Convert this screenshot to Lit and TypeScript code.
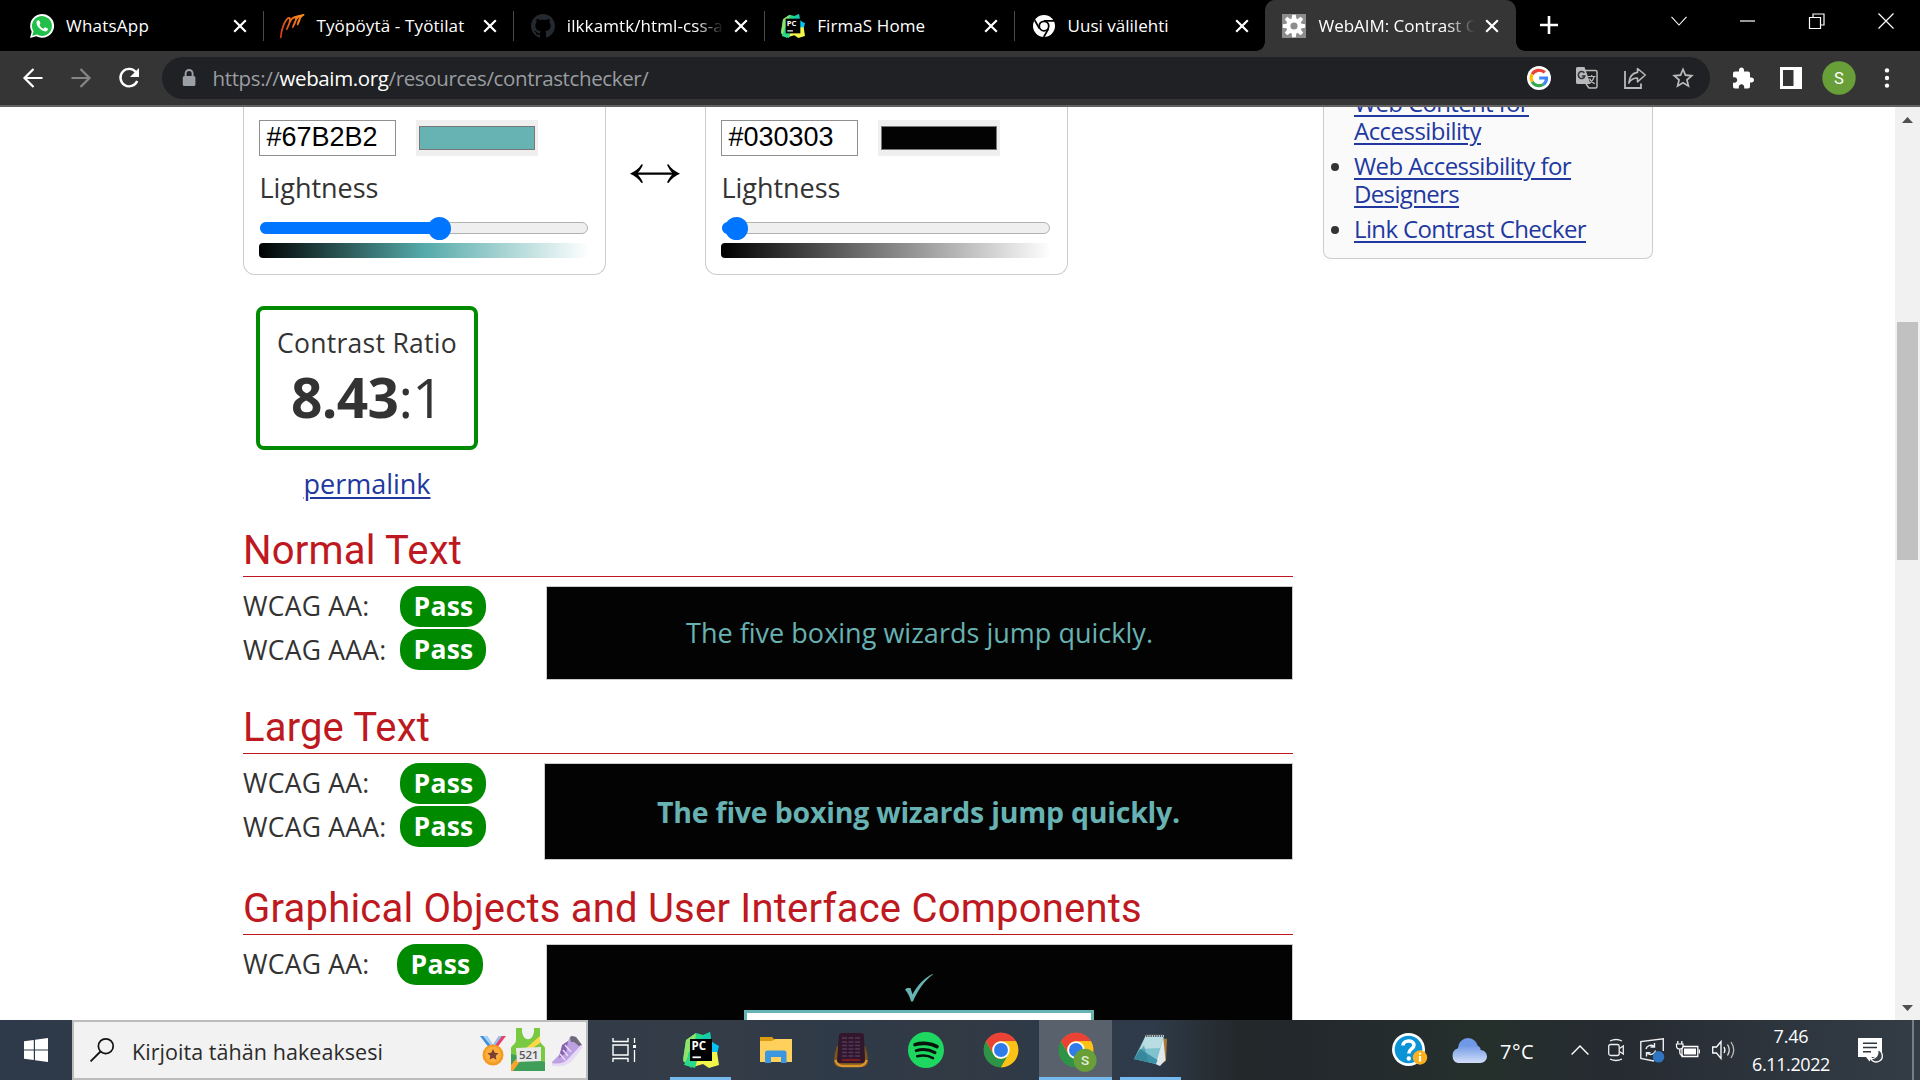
import { LitElement, html, css, svg } from "lit";
import { customElement, property } from "lit/decorators.js";

/* One line of text whose letter spacing is tuned to a given advance width. */
@customElement("fit-text")
class FitText extends LitElement {
  @property({ type: Number }) w = 0;
  static styles = css`
    :host { display: inline; white-space: nowrap; }
  `;
  render() { return html`<slot></slot>`; }
  firstUpdated() {
    const n = (this.textContent || "").trim().length;
    const natural = this.getBoundingClientRect().width;
    if (this.w && n && natural) this.style.letterSpacing = `${((this.w - natural) / n).toFixed(3)}px`;
  }
}

const icon = (w: number, h: number, vb: string, body: unknown) =>
  html`<svg width=${w} height=${h} viewBox=${vb} fill="none" aria-hidden="true">${body}</svg>`;

const chromeLogo = svg`
  <g>
    <circle cx="24" cy="24" r="21.5" fill="#fbbc05"/>
    <path d="M4.95 13A22 22 0 0 1 43.05 13L24 13A11 11 0 0 0 14.47 29.5Z" fill="#ea4335"/>
    <path transform="rotate(240 24 24)" d="M4.95 13A22 22 0 0 1 43.05 13L24 13A11 11 0 0 0 14.47 29.5Z" fill="#2d9347"/>
    <path transform="rotate(120 24 24)" d="M4.95 13A22 22 0 0 1 43.05 13L24 13A11 11 0 0 0 14.47 29.5Z" fill="#fcc215"/>
    <circle cx="24" cy="24" r="11" fill="#fff"/>
    <circle cx="24" cy="24" r="8.8" fill="#2f7bea"/>
  </g>`;

const pycharm = (size: number) => icon(size, size, "0 0 36 36", svg`
  <path d="M3 8L13 1L20 3L27 0L28 8L31 12L28 19L12 31L8 36L0 27Z" fill="#21d789"/>
  <path d="M3 8L13 1L12 10L5 22L6 34L0 29Z" fill="#8fe36b"/>
  <path d="M18 6L27 0L28 8L24 12Z" fill="#15c9b0"/>
  <path d="M29 10L36 14L34 22L28 21Z" fill="#07c3f2"/>
  <path d="M34 20L36 33L26 36L20 32L10 35L14 27L28 20Z" fill="#f2f54a"/>
  <path d="M5 24L14 29L12 36L1 33Z" fill="#2bd98a"/>
  <rect x="7" y="7" width="22" height="22" fill="#000"/>
  <text x="8.6" y="18.4" font-family="Open Sans, sans-serif" font-weight="700" font-size="11.5" fill="#fff">PC</text>
  <rect x="9.5" y="24.4" width="8.4" height="1.8" fill="#fff"/>`);

const favWhatsapp = icon(24, 24, "0 0 24 24", svg`
  <path d="M0 24L1.7 17.8A12 11.9 0 1 1 6.3 22.3Z" fill="#fff"/>
  <path d="M2.2 21.8L3.5 17.3A10 9.9 0 1 1 7 20.6Z" fill="#1fbf4a"/>
  <path d="M8.3 6.2c-.6-.1-1.8.7-1.8 2.4 0 3.800 4.900 8.800 8.900 8.800 1.600 0 2.700-1.100 2.600-2.600 0-.3-2.800-1.700-3.100-1.500l-1.300 1.400c-1.800-.7-3.300-2-4.100-3.800l.9-1.300c.1-.3-1-3.300-1.500-3.400z" fill="#fff"/>`);

const favWorkspace = icon(24, 24, "0 0 24 24", svg`
  <defs><linearGradient id="wk" x1="0" y1="1" x2="1" y2="0">
    <stop offset="0" stop-color="#d9341c"/><stop offset="1" stop-color="#f7941d"/></linearGradient></defs>
  <path d="M.8 23.500C1 17 4 7.500 8 4.200C11.500 2 10 9.500 6.800 15.200C9 9 12.500 3 15 2.800C17.300 3 15.500 8.500 12.800 13.200C14.500 8.500 17 2.800 19.400 2.400C21 2.600 19.500 7 17.600 10.600C18.300 6.400 20 3 23.600.8M12 4.500C16 2.500 20 1.500 23.600.8" stroke="url(#wk)" stroke-width="1.700" stroke-linecap="round" stroke-linejoin="round"/>`);

const favGithub = icon(24, 24, "0 0 16 16", svg`
  <path fill="#24292f" d="M8 0C3.58 0 0 3.58 0 8c0 3.54 2.29 6.53 5.47 7.59.4.07.55-.17.55-.38 0-.19-.01-.82-.01-1.49-2.01.37-2.53-.49-2.69-.94-.09-.23-.48-.94-.82-1.13-.28-.15-.68-.52-.01-.53.63-.01 1.080.58 1.230.82.72 1.210 1.870.87 2.330.66.07-.52.28-.87.51-1.070-1.780-.2-3.640-.89-3.640-3.950 0-.87.31-1.590.82-2.150-.08-.2-.36-1.020.08-2.120 0 0 .67-.21 2.200.82.64-.18 1.320-.27 2-.27s1.360.09 2 .27c1.530-1.040 2.200-.82 2.200-.82.44 1.100.16 1.920.08 2.120.51.56.82 1.270.82 2.150 0 3.070-1.870 3.750-3.650 3.950.29.25.54.73.54 1.480 0 1.070-.01 1.930-.01 2.200 0 .21.15.46.55.38A8.010 8.010 0 0 0 16 8c0-4.420-3.580-8-8-8z"/>`);

const favChromeMono = icon(24, 24, "0 0 48 48", svg`
  <circle cx="24" cy="24" r="22" fill="#fff"/>
  <circle cx="24" cy="24" r="9.500" stroke="#000" stroke-width="3.500"/>
  <path d="M24 13.500H44M14.900 29.250L5.500 12.500M33.100 29.250L23.500 46" stroke="#000" stroke-width="3.500"/>`);

const favGear = icon(24, 24, "0 0 24 24", svg`
  <rect width="24" height="24" fill="#8d8d8d"/>
  <circle cx="12" cy="12" r="7.800" fill="#fff"/>
  ${[0, 45, 90, 135, 180, 225, 270, 315].map(
    (a) => svg`<path transform=${`rotate(${a} 12 12)`} d="M9.500 6L10.200 .8H13.800L14.500 6Z" fill="#fff"/>`
  )}
  <circle cx="12" cy="12" r="3.600" fill="#8d8d8d"/>`);

const closeIcon = icon(14, 14, "0 0 14 14", svg`<path d="M1.200 1.200L12.800 12.800M12.800 1.200L1.200 12.800" stroke="#fff" stroke-width="2.200"/>`);

const tabs = [
  { ico: favWhatsapp, title: "WhatsApp", w: 83 },
  { ico: favWorkspace, title: "Työpöytä - Työtilat", w: 148 },
  { ico: favGithub, title: "ilkkamtk/html-css-a", w: 156, fade: true },
  { ico: pycharm(24), title: "FirmaS Home", w: 108 },
  { ico: favChromeMono, title: "Uusi välilehti", w: 101 },
  { ico: favGear, title: "WebAIM: Contrast C", w: 158, fade: true, active: true },
];

@customElement("browser-chrome")
class BrowserChrome extends LitElement {
  static styles = css`
    :host { display: block; font-family: "Open Sans", "Noto Sans", sans-serif; }
    svg { display: block; flex: none; overflow: visible; }
    .strip { display: flex; height: 51px; background: #000; padding-left: 13px; }
    .tab { display: flex; align-items: center; width: 250.4px; height: 51px; padding: 0 0 0 17px; box-sizing: border-box; color: #fff; flex: none; }
    .tab .title { flex: none; width: 157px; margin-left: 12px; overflow: hidden; font-size: 17px; line-height: 26px; height: 26px; }
    .tab.fade .title { -webkit-mask-image: linear-gradient(90deg, #000 82%, transparent 100%); }
    .tab .x { margin-left: 10px; }
    .tab .bar { width: 1px; height: 30px; background: #4a4a4a; margin-left: 16px; }
    .tab.active { background: #353535; border-radius: 10px 10px 0 0; position: relative; width: 251.500px; padding-left: 17.500px; }
    .tab.active::before, .tab.active::after { content: ""; position: absolute; bottom: 0; width: 9px; height: 9px; }
    .tab.active::before { left: -9px; background: radial-gradient(circle at 0 0, transparent 8.500px, #353535 9px); }
    .tab.active::after { right: -9px; background: radial-gradient(circle at 100% 0, transparent 8.500px, #353535 9px); }
    .plus { margin: 16px 0 0 23.500px; }
    .win { display: flex; margin-left: auto; }
    .win div { width: 69px; height: 42px; display: flex; align-items: center; justify-content: center; }
    .bar2 { display: flex; align-items: center; height: 54px; background: #353535; padding-left: 9px; border-bottom: 2px solid #636161; }
    .c { width: 48px; height: 48px; display: flex; align-items: center; justify-content: center; flex: none; }
    .omni { display: flex; align-items: center; width: 1548px; height: 42px; border-radius: 21px; background: #202124; margin: 0 9px; padding: 0 3px 0 18px; box-sizing: border-box; color: #9a9da1; }
    .url { font-size: 20.500px; line-height: 30px; margin: 0 auto 0 14.500px; }
    .url b { font-weight: 400; color: #fff; }
  `;
  render() {
    return html`
      <div class="strip">
        ${tabs.map((t, i) => html`
          <div class="tab ${t.fade ? "fade" : ""} ${t.active ? "active" : ""}">
            ${t.ico}
            <div class="title"><fit-text .w=${t.w}>${t.title}</fit-text></div>
            <div class="x">${closeIcon}</div>
            ${i < 4 ? html`<div class="bar"></div>` : ""}
          </div>`)}
        <div class="plus">${icon(18, 18, "0 0 18 18", svg`<path d="M9 0V18M0 9H18" stroke="#fff" stroke-width="2.600"/>`)}</div>
        <div class="win">
          <div>${icon(16, 10, "0 0 16 10", svg`<path d="M.5 .8L8 9L15.500 .8" stroke="#fff" stroke-width="1.100"/>`)}</div>
          <div>${icon(15, 2, "0 0 15 2", svg`<path d="M0 1H15" stroke="#fff" stroke-width="1.200"/>`)}</div>
          <div>${icon(16, 16, "0 0 16 16", svg`<path d="M.5 4.500H11.500V15.500H.5ZM4 4.500V1H15V12H11.500" stroke="#fff" stroke-width="1.200"/>`)}</div>
          <div>${icon(16, 16, "0 0 16 16", svg`<path d="M.5 .5L15.500 15.500M15.500 .5L.5 15.500" stroke="#fff" stroke-width="1.200"/>`)}</div>
        </div>
      </div>
      <div class="bar2">
        <div class="c">${icon(20, 20, "0 0 20 20", svg`<path d="M19.500 10H2M10.500 1L1.500 10L10.500 19" stroke="#fff" stroke-width="2.200"/>`)}</div>
        <div class="c">${icon(20, 20, "0 0 20 20", svg`<path d="M.5 10H18M9.500 1L18.500 10L9.500 19" stroke="#868686" stroke-width="2.200"/>`)}</div>
        <div class="c">${icon(22, 20, "0 0 22 20", svg`<path d="M18 4.200A8.700 8.700 0 1 0 19.200 13" stroke="#fff" stroke-width="2.400"/><path d="M21 0V9H12Z" fill="#fff"/>`)}</div>
        <div class="omni">
          ${icon(18, 18, "0 0 18 18", svg`<rect x="2.800" y="7" width="12.600" height="10" rx="1.500" fill="#9aa0a6"/><path d="M5.600 8V4.500A3.500 3.500 0 0 1 12.600 4.500V8" stroke="#9aa0a6" stroke-width="1.900"/>`)}
          <fit-text class="url" .w=${436}>https://<b>webaim.org</b>/resources/contrastchecker/</fit-text>
          <div class="c">${icon(24, 24, "0 0 24 24", svg`
            <circle cx="12" cy="12" r="12" fill="#fff"/>
            <g stroke-width="3.200">
              <path d="M17.800 6.400A8 7.600 0 0 0 5.200 8.200" stroke="#ea4335"/>
              <path d="M5.200 8.200A7.600 7.600 0 0 0 5.200 15.800" stroke="#fbbc05"/>
              <path d="M5.200 15.800A7.800 7.700 0 0 0 16.600 18.200" stroke="#34a853"/>
              <path d="M16.600 18.200C18.900 16.500 19.600 14.500 19.500 12H12.200" stroke="#4285f4"/>
            </g>`)}</div>
          <div class="c">${icon(22, 22, "0 0 22 22", svg`
            <path d="M9 3.500H19.500A1.500 1.500 0 0 1 21 5V19.500A1.500 1.500 0 0 1 19.500 21H13L10 17" stroke="#b9b9b9" stroke-width="1.500"/>
            <path d="M1.500 0H8.500L14.500 17H1.500A1.500 1.500 0 0 1 0 15.500V1.500A1.500 1.500 0 0 1 1.500 0Z" fill="#b9b9b9"/>
            <path d="M8.300 6A3.300 3.500 0 1 0 8.800 9H5.800" stroke="#35363a" stroke-width="1.600"/>
            <path d="M11.800 9.500H19.500M15.700 8V9.500M18 9.800C17.500 13 14.500 15.600 13.300 16.600M13.600 11.500C14.500 14 17 16 18.800 16.800" stroke="#b9b9b9" stroke-width="1.200"/>`)}</div>
          <div class="c">${icon(22, 22, "0 0 22 22", svg`
            <path d="M1 4V21H17V16.500" stroke="#b9b9b9" stroke-width="1.800"/>
            <path d="M13.500 1.500L21.300 8L13.500 14.800V11C9.500 11 7 12.200 4.800 16C5.500 10 8.500 6 13.500 5.400Z" stroke="#b9b9b9" stroke-width="1.600" stroke-linejoin="round"/>`)}</div>
          <div class="c">${icon(26, 26, "0 0 24 24", svg`<path fill="#b9b9b9" d="M22 9.240l-7.190-.62L12 2 9.190 8.630 2 9.240l5.460 4.730L5.820 21 12 17.270 18.180 21l-1.630-7.030L22 9.240zM12 15.400l-3.760 2.270 1-4.280-3.320-2.880 4.380-.38L12 6.100l1.710 4.040 4.380.38-3.320 2.880 1 4.280L12 15.400z"/>`)}</div>
        </div>
        <div class="c">${icon(24, 25, "0 0 24 24", svg`<path fill="#fff" d="M20.500 11H19V7c0-1.100-.9-2-2-2h-4V3.500C13 2.120 11.880 1 10.500 1S8 2.120 8 3.500V5H4c-1.100 0-1.990.9-1.990 2v3.800H3.500c1.490 0 2.700 1.210 2.700 2.700s-1.210 2.700-2.700 2.700H2V20c0 1.100.9 2 2 2h3.800v-1.500c0-1.490 1.210-2.700 2.700-2.700 1.490 0 2.700 1.210 2.700 2.700V22H17c1.100 0 2-.9 2-2v-4h1.500c1.380 0 2.500-1.120 2.500-2.500S21.880 11 20.500 11z"/>`)}</div>
        <div class="c">${icon(22, 22, "0 0 22 22", svg`<path fill="#fff" fill-rule="evenodd" d="M0 0H22V22H0ZM3 3V19H13.500V3Z"/>`)}</div>
        <div class="c">${icon(34, 34, "0 0 34 34", svg`<circle cx="17" cy="17" r="16.700" fill="#689f38"/><text x="17" y="22.700" text-anchor="middle" font-family="Roboto, sans-serif" font-size="16.500" fill="#fff">S</text>`)}</div>
        <div class="c">${icon(6, 20, "0 0 6 20", svg`<circle cx="3" cy="2.400" r="2.200" fill="#fff"/><circle cx="3" cy="10" r="2.200" fill="#fff"/><circle cx="3" cy="17.600" r="2.200" fill="#fff"/>`)}</div>
      </div>`;
  }
}

@customElement("color-card")
class ColorCard extends LitElement {
  @property() hex = "";
  @property() mid = "";
  @property({ type: Number }) thumb = 0;
  static styles = css`
    :host { display: block; box-sizing: border-box; width: 363px; height: 168px; padding: 13px 15px 0; border: 1px solid #ccc; border-top: 0; border-radius: 0 0 12px 12px; }
    .row { display: flex; gap: 20px; }
    .field { box-sizing: border-box; width: 137px; height: 36px; border: 1px solid #8f8f8f; padding-left: 6.500px; font: 27px/32px "Liberation Sans", Arial, sans-serif; color: #000; }
    .swatch { box-sizing: border-box; width: 122px; height: 36px; background: #efefef; padding: 6px 3px; }
    .swatch div { box-sizing: border-box; height: 24px; border: 1px solid #777; }
    .lab { margin: 15px 0 0 .4px; font-size: 27px; line-height: 34px; height: 33px; }
    .track { box-sizing: border-box; position: relative; width: 328px; height: 12px; margin: 18px 0 0 1px; border: 1px solid #b2b2b2; border-radius: 6px; background: #efefef; }
    .fill { position: absolute; left: -1px; top: -1px; height: 12px; border-radius: 6px; background: #0075ff; }
    .knob { position: absolute; right: -11.500px; top: -5.500px; width: 23px; height: 23px; border-radius: 50%; background: #0075ff; }
    .grad { width: 330px; height: 15px; margin-top: 9px; border-radius: 4px; }
  `;
  render() {
    return html`
      <div class="row">
        <div class="field">${this.hex}</div>
        <div class="swatch"><div style="background:${this.hex}"></div></div>
      </div>
      <div class="lab"><fit-text .w=${119}>Lightness</fit-text></div>
      <div class="track"><div class="fill" style="width:${this.thumb}px"><div class="knob"></div></div></div>
      <div class="grad" style="background:linear-gradient(90deg,#000,${this.mid},#fff)"></div>`;
  }
}

@customElement("page-view")
class PageView extends LitElement {
  static styles = css`
    :host { display: flex; height: 913px; overflow: hidden; background: #fff; color: #333; font-family: "Open Sans", "Noto Sans", sans-serif; padding-left: 243px; box-sizing: border-box; }
    svg { display: block; overflow: visible; }
    .main { width: 1050px; flex: none; }
    .cards { display: flex; }
    .swap { width: 99px; display: flex; justify-content: center; padding: 57px 2px 0 0; box-sizing: border-box; }
    .ratio { box-sizing: border-box; width: 222px; height: 144px; margin: 31px 0 0 13px; padding-top: 14px; border: 4px solid #008a00; border-radius: 8px; text-align: center; }
    .ratio .t { font-size: 26.500px; line-height: 38px; height: 36px; }
    .ratio .n { font-size: 55px; line-height: 66px; height: 66px; margin-top: 4px; }
    .perma { width: 222px; margin: 16px 0 0 13px; text-align: center; font-size: 27px; line-height: 36px; height: 36px; }
    a { color: #2138a0; text-decoration: underline; text-decoration-thickness: 2px; text-underline-offset: 3px; }
    h2 { font: 400 40px/50px Roboto, sans-serif; color: #be1820; margin: 23px 0 0; padding-bottom: 2px; border-bottom: 1px solid #be1820; height: 48px; white-space: nowrap; }
    h2.first { margin-top: 24px; }
    h2.third { margin-top: 24px; }
    .sec { display: flex; justify-content: space-between; margin-top: 9px; }
    .rows { display: flex; flex-direction: column; gap: 2.500px; }
    .r { display: flex; align-items: center; height: 40.700px; font-size: 26.500px; line-height: 36px; }
    .l { width: 157px; }
    .l.s { width: 154px; }
    .pill { box-sizing: border-box; width: 86px; height: 40.700px; line-height: 41px; padding-left: 1px; border-radius: 19px; background: #008a00; color: #fff; text-align: center; font-weight: 700; font-size: 26.500px; }
    .box { box-sizing: border-box; width: 747px; height: 94px; border: 1px solid #ccc; background: #030303; color: #67b2b2; display: flex; align-items: center; justify-content: center; font-size: 27px; padding-bottom: 1px; }
    .box.big { width: 749px; height: 97px; font-size: 28.500px; font-weight: 700; padding: 1px 0 0; }
    .box.gfx { height: 180px; flex-direction: column; justify-content: flex-start; padding: 29px 2px 0 0; }
    .inp { box-sizing: border-box; width: 350px; height: 60px; margin-top: 8px; border: 3px solid #67b2b2; background: #fff; }
    .side { box-sizing: border-box; width: 330px; height: 152px; margin-left: 30px; flex: none; border: 1px solid #ccc; border-top: 0; border-radius: 0 0 8px 8px; background: #fafafa; font-size: 24px; line-height: 28px; }
    ul { margin: -18px 0 0; padding: 0 0 0 30px; list-style: none; }
    li { position: relative; margin-bottom: 7px; }
    li.dot::before { content: ""; position: absolute; left: -23px; top: 11px; width: 8px; height: 8px; border-radius: 50%; background: #333; }
    .scroll { width: 25px; margin-left: auto; background: #f1f1f1; display: flex; flex-direction: column; align-items: center; padding: 10px 0 9px; box-sizing: border-box; }
    .thumb { width: 21px; height: 238px; background: #c1c1c1; margin: 199px 0 auto; }
  `;
  row(label: string, w: number, narrow = false) {
    return html`<div class="r"><div class="l ${narrow ? "s" : ""}"><fit-text .w=${w}>${label}</fit-text></div><div class="pill"><fit-text .w=${60}>Pass</fit-text></div></div>`;
  }
  render() {
    return html`
      <div class="main">
        <div class="cards">
          <color-card hex="#67B2B2" mid="#55aaaa" .thumb=${179}></color-card>
          <div class="swap">${icon(50, 20, "0 0 50 20", svg`<path d="M5 9.700H45" stroke="#000" stroke-width="2.200"/><path d="M0 9.700C5 7.500 9 4.500 11.500 .3L13 .8C11.500 4 10 6.500 8 8.600V10.800C10 12.900 11.500 15.400 13 18.600L11.500 19.100C9 14.900 5 11.900 0 9.700ZM50 9.700C45 7.500 41 4.500 38.500 .3L37 .8C38.500 4 40 6.500 42 8.600V10.800C40 12.900 38.500 15.400 37 18.600L38.500 19.100C41 14.900 45 11.900 50 9.700Z" fill="#000"/>`)}</div>
          <color-card hex="#030303" mid="#808080" .thumb=${14}></color-card>
        </div>
        <div class="ratio">
          <div class="t"><fit-text .w=${180}>Contrast Ratio</fit-text></div>
          <div class="n"><fit-text .w=${152}><b>8.43</b>:1</fit-text></div>
        </div>
        <div class="perma"><a href="#"><fit-text .w=${127}>permalink</fit-text></a></div>

        <h2 class="first"><fit-text .w=${219}>Normal Text</fit-text></h2>
        <div class="sec">
          <div class="rows">${this.row("WCAG AA:", 126.5)}${this.row("WCAG AAA:", 143.5)}</div>
          <div class="box"><fit-text .w=${467}>The five boxing wizards jump quickly.</fit-text></div>
        </div>

        <h2><fit-text .w=${187}>Large Text</fit-text></h2>
        <div class="sec">
          <div class="rows">${this.row("WCAG AA:", 126.5)}${this.row("WCAG AAA:", 143.5)}</div>
          <div class="box big"><fit-text .w=${523}>The five boxing wizards jump quickly.</fit-text></div>
        </div>

        <h2 class="third"><fit-text .w=${899}>Graphical Objects and User Interface Components</fit-text></h2>
        <div class="sec">
          <div class="rows">${this.row("WCAG AA:", 126.5, true)}</div>
          <div class="box gfx">
            ${icon(28, 28, "0 0 28 28", svg`<path d="M0 15.500L2 14H5.500L7.500 20.500C12 12 19 4 27.500 0L28 .6C19 7 12.500 17 8 27.500H6C5 23 3 19 0 15.500Z" fill="#67b2b2"/>`)}
            <div class="inp"></div>
          </div>
        </div>
      </div>
      <div class="side">
        <ul>
          <li><a href="#"><fit-text .w=${175}>Web Content for</fit-text></a><br><a href="#"><fit-text .w=${127}>Accessibility</fit-text></a></li>
          <li class="dot"><a href="#"><fit-text .w=${217}>Web Accessibility for</fit-text></a><br><a href="#"><fit-text .w=${105}>Designers</fit-text></a></li>
          <li class="dot"><a href="#"><fit-text .w=${232}>Link Contrast Checker</fit-text></a></li>
        </ul>
      </div>
      <div class="scroll">
        ${icon(11, 6, "0 0 11 6", svg`<path d="M0 6L5.500 0L11 6Z" fill="#505050"/>`)}
        <div class="thumb"></div>
        ${icon(11, 6, "0 0 11 6", svg`<path d="M0 0L5.500 6L11 0Z" fill="#505050"/>`)}
      </div>`;
  }
}

@customElement("task-bar")
class TaskBar extends LitElement {
  static styles = css`
    :host { display: flex; height: 60px; background: linear-gradient(90deg, #2e3a49 0, #333c47 38%, #2f3a48 44%, #323a44 50%, #2f3a48 54%, #2f3b4a 60%, #23282a 64.500%, #23282d 68%, #25302c 77%, #262b31 84%, #2e363f 94%, #343c46 100%); color: #fff; font-family: "Open Sans", "Noto Sans", sans-serif; }
    svg { display: block; overflow: visible; flex: none; }
    .start { width: 72px; display: flex; align-items: center; justify-content: center; }
    .search { box-sizing: border-box; width: 516px; height: 60px; border: 2px solid #bcbcbc; background: #f2f2f2; display: flex; align-items: center; color: #2b2b2b; padding: 0 3px 0 16px; }
    .q { font-size: 21.500px; line-height: 30px; margin: 3px auto 0 18px; }
    .app { box-sizing: border-box; width: 75px; height: 60px; display: flex; align-items: center; justify-content: center; position: relative; }
    .tv { width: 71px; margin-right: 4px; }
    .run::after { content: ""; position: absolute; left: 7px; right: 7px; bottom: 0; height: 3px; background: #76b9ed; }
    .on { background: #59626c; width: 73px; margin: 0 1px; }
    .on.run::after { left: 0; right: 0; }
    .weather { display: flex; align-items: center; margin-left: auto; }
    .cloud { margin-left: 23px; }
    .temp { margin: 3px 0 0 13px; width: 62px; font-size: 20px; line-height: 28px; }
    .t { width: 36px; height: 60px; display: flex; align-items: center; justify-content: center; }
    .clock { width: 97px; font-size: 18px; line-height: 28px; text-align: center; padding-top: 2px; }
    .clock div { height: 28px; padding-left: 1px; }
    .note { width: 62px; display: flex; align-items: center; justify-content: center; }
    .edge { width: 2px; margin: 0 6px 0 11px; background: #777d84; }
  `;
  render() {
    return html`
      <div class="start">${icon(24, 24, "0 0 24 24", svg`<path fill="#fff" d="M0 3.300L9.800 2V11.400H0ZM11 1.800L24 0V11.400H11ZM0 12.600H9.800V22L0 20.700ZM11 12.600H24V24L11 22.200Z"/>`)}</div>
      <div class="search">
        ${icon(24, 24, "0 0 24 24", svg`<circle cx="15.800" cy="8.200" r="7.400" stroke="#111" stroke-width="1.700"/><path d="M10.500 13.500L.6 23.400" stroke="#111" stroke-width="1.800"/>`)}
        <fit-text class="q" .w=${251}>Kirjoita tähän hakeaksesi</fit-text>
        ${icon(103, 44, "0 0 103 44", svg`
          <path d="M0 8H7L13 17L10 21Z" fill="#3d8de0"/><path d="M3 8H7L13 17L12 19Z" fill="#a6d2f7"/>
          <path d="M26 8H19L13 17L16 21Z" fill="#e8406a"/><path d="M22 8H19L13 17L14 19Z" fill="#8cc4f5"/>
          <circle cx="13" cy="27" r="10.500" fill="#f59a23"/><circle cx="13" cy="26.500" r="8" fill="#fbb03b"/>
          <path d="M13 21L14.700 24.700L18.500 25.200L15.700 27.800L16.400 31.700L13 29.800L9.600 31.700L10.300 27.800L7.500 25.200L11.300 24.700Z" fill="#7b3f34"/>
          <path d="M36 0H42C41 15 55 15 54 0H60V12C60 16 65 18 65 20V43H31V20C31 18 36 16 36 12Z" fill="#7ac943"/>
          <path d="M31 26L65 34V43H31Z" fill="#3f9e58"/>
          <path d="M60 8V15L51 21H45Z" fill="#ffd84a"/><path d="M41 32L33 43H31V37L36 31Z" fill="#f9a42c"/>
          <path d="M36 20L61 19L61 33L37 34Z" fill="#e9e9e9"/>
          <text x="48.800" y="31" text-anchor="middle" font-family="Open Sans, sans-serif" font-weight="600" font-size="11.500" fill="#555">521</text>
          <path d="M90 9L92 8L96 9L102 18Q98 22 92 31Q85 39 73 38L72 34L79 27L83 17L88 13Z" fill="#bda0e2"/>
          <path d="M90 9L92 8L96 9L102 17L99 18L94 14L91 14Z" fill="#6f6a78"/>
          <path d="M82 17L88 13L86 25L79 30Z" fill="#8562ad"/>
          <path d="M85 17L91 24M83 22L88 28M80 26L85 32" stroke="#ead9fa" stroke-width="1.500"/>
          <path d="M72 35Q82 37 88 31L101 17L103 19L92 33Q84 40 73 38Z" fill="#e6daf5"/>`)}
      </div>
      <div class="app tv">${icon(24, 24, "0 0 24 24", svg`<path d="M1 0V3.500H16V0M1 24V20.500H16V24M1 7H16V17H1Z" stroke="#fff" stroke-width="1.400"/><path d="M22.500 0V5M22.500 12V24" stroke="#fff" stroke-width="1.300"/><rect x="21" y="7" width="3" height="3" fill="#fff"/>`)}</div>
      <div class="app run">${pycharm(36)}</div>
      <div class="app">${icon(32, 26, "0 0 32 26", svg`<path d="M0 0H12L15 3H32V6H0Z" fill="#dd9b12"/><path d="M0 4H12L15 2H32V25H0Z" fill="#ffd05c"/><path d="M5 26V16Q5 13.500 7.500 13.500H24Q26.500 13.500 26.500 16V26H21V20H11V26Z" fill="#3b97e0"/>`)}</div>
      <div class="app">${icon(34, 34, "0 0 34 34", svg`
        <path d="M3 13Q0 22 0 29Q1 34 6 34H28Q33 34 34 29Q34 22 31 13Z" fill="#7d5620"/>
        <path d="M1.500 27Q3 33 9 33H25Q31 33 32.500 27" stroke="#d9962a" stroke-width="2.500"/>
        <path d="M5 3Q5 0 8 0H26Q30 0 30 3L31 27Q31 30 28 30H6Q3 30 3 27Z" fill="#32162c"/>
        <g stroke="#54385a" stroke-width="1.300" stroke-dasharray="5 1.500"><path d="M8 5H27M8 9H27M8 12.500H27M8 16H27M8 19.500H27M8 23H27"/></g>
        <path d="M8 27H26" stroke="#962020" stroke-width="1.500"/>`)}</div>
      <div class="app">${icon(36, 36, "0 0 36 36", svg`<circle cx="18" cy="18" r="18" fill="#1ed760"/><g stroke="#07140b" stroke-linecap="round"><path d="M7 12.600C14 10.400 23 11.200 29 14.600" stroke-width="3.600"/><path d="M8.200 18.600C14.500 16.800 21.500 17.500 27 20.600" stroke-width="3"/><path d="M9.200 24.200C14.500 22.900 20.500 23.400 25 26.100" stroke-width="2.500"/></g>`)}</div>
      <div class="app">${icon(38, 38, "0 0 48 48", chromeLogo)}</div>
      <div class="app on run">${icon(38, 38, "0 0 48 48", svg`${chromeLogo}<circle cx="35.500" cy="37" r="14.500" fill="#689f38"/><text x="35.500" y="43" text-anchor="middle" font-family="Roboto, sans-serif" font-weight="500" font-size="17" fill="#e8f0dc">S</text>`)}</div>
      <div class="app run">${icon(34, 34, "0 0 34 34", svg`
        <path d="M28 5L33 6L32 28L27 31Z" fill="#a87a35"/>
        <path d="M29 2L31.500 27L26 33L19 30Z" fill="#dfe8ea"/>
        <path d="M12 2H30L22 31L0 26Z" fill="#7fc3cf"/><path d="M12 2H30L26 15L6 16Z" fill="#b9dde2"/>
        <path d="M0 26L22 31L23.500 27L6 16Z" fill="#3f93a8"/>
        <path d="M0 26L10 12L14 29Z" fill="#2f7c92" opacity=".5"/>
        <path d="M12 2.500H29" stroke="#555" stroke-width="3" stroke-dasharray="1.300 1"/>`)}</div>
      <div class="weather">
        ${icon(36, 36, "0 0 36 36", svg`<circle cx="16.500" cy="17.500" r="16.500" fill="#fff"/><circle cx="16.500" cy="17.500" r="13.800" fill="#0a94d6"/><path d="M11 13.500C11 7.500 22 7.500 22 13C22 17 16.800 17 16.800 21.500" stroke="#fff" stroke-width="3.600"/><circle cx="16.800" cy="26.500" r="2.200" fill="#fff"/><circle cx="28" cy="25.500" r="7.200" fill="#f9b21d"/><path d="M28 24V29.500M28 20.800V22.600" stroke="#fff" stroke-width="2.200"/>`)}
        <div class="cloud">${icon(36, 25, "0 0 36 25", svg`<defs><linearGradient id="cl" x1="0" y1="0" x2="0" y2="1"><stop offset="0" stop-color="#6e97e6"/><stop offset="1" stop-color="#d3dff8"/></linearGradient></defs><circle cx="17" cy="10" r="10" fill="#6f98e8"/><path d="M7 25A7 7.500 0 0 1 6.500 10.500A7.500 7.500 0 0 1 18 9.500Q21 5.500 26 7.500Q30 9 29.500 12A6.800 6.500 0 0 1 29 25Z" fill="url(#cl)"/>`)}</div>
        <div class="temp"><fit-text .w=${34}>7°C</fit-text></div>
      </div>
      <div class="t">${icon(18, 10, "0 0 18 10", svg`<path d="M.6 9.400L9 1L17.400 9.400" stroke="#fff" stroke-width="1.400"/>`)}</div>
      <div class="t">${icon(16, 24, "0 0 16 24", svg`<rect x=".7" y="6.500" width="10.500" height="11" rx="2" stroke="#eee" stroke-width="1.300"/><path d="M11.500 10.500L15.300 8V16L11.500 13.500M2 3Q8 0 14 3M2 21Q8 24 14 21" stroke="#eee" stroke-width="1.300"/>`)}</div>
      <div class="t">${icon(24, 24, "0 0 24 24", svg`<path d="M14 23L.8 20.500V3.500L23.300 .8V13" stroke="#eee" stroke-width="1.400"/><path d="M6 11A5 4.600 0 0 1 14 8.300M14.500 5V9H10.500M15.500 12.500A5 4.600 0 0 1 7.500 15.500M6.500 18.500V14.800H10.500" stroke="#eee" stroke-width="1.400"/><circle cx="18.500" cy="18.800" r="5.800" fill="#2f75bf"/>`)}</div>
      <div class="t">${icon(24, 18, "0 0 24 18", svg`<path d="M6 15.500V5.500H21.800V15.500Z" stroke="#fff" stroke-width="1.300"/><rect x="8" y="7.500" width="12" height="6" fill="#fff"/><path d="M23.300 8.500V12.500M1.800 0V3M5.800 0V3M3.800 8V11Q3.800 14.500 7 14.500" stroke="#fff" stroke-width="1.300"/><path d="M.5 3H7V5Q7 8 3.800 8Q.5 8 .5 5Z" stroke="#fff" stroke-width="1.200" fill="#262b30"/>`)}</div>
      <div class="t">${icon(24, 20, "0 0 24 20", svg`<path d="M.7 7H4.500L9 1.500V18.500L4.500 13H.7Z" stroke="#fff" stroke-width="1.300"/><path d="M12 7Q13.800 10 12 13" stroke="#fff" stroke-width="1.300"/><path d="M15.500 4.500Q19 10 15.500 15.500" stroke="#ddd" stroke-width="1.300"/><path d="M19 2Q24.500 10 19 18" stroke="#bbb" stroke-width="1.300"/>`)}</div>
      <div class="clock"><div><fit-text .w=${35}>7.46</fit-text></div><div><fit-text .w=${78}>6.11.2022</fit-text></div></div>
      <div class="note">${icon(25, 25, "0 0 25 25", svg`<path d="M0 0H24V19H14L11.500 23.500L8 19H0Z" fill="#fff"/><path d="M5 5.200H19M5 9.500H19M5 13.700H13" stroke="#2e363f" stroke-width="1.400"/><path d="M19.500 11.500C25.500 13.500 26 21.500 20.500 23.500C17.500 24.800 14 23.500 12.800 20.500C17.500 21.500 21 17 19.500 11.500Z" fill="#3a424b" stroke="#fff" stroke-width="1.300"/>`)}</div>
      <div class="edge"></div>`;
  }
}

@customElement("app-root")
class AppRoot extends LitElement {
  static styles = css`
    :host { display: block; width: 1920px; height: 1080px; overflow: hidden; }
  `;
  render() {
    return html`<browser-chrome></browser-chrome><page-view></page-view><task-bar></task-bar>`;
  }
}
